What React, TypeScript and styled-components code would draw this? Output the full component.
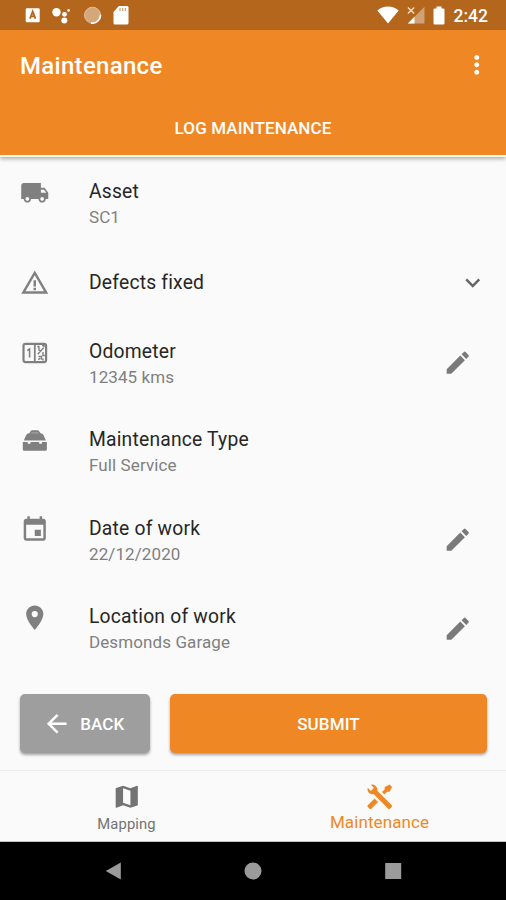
import React from "react";
import styled, { createGlobalStyle } from "styled-components";
import {
  MdArrowBack,
  MdEdit,
  MdEvent,
  MdExpandMore,
  MdLocalShipping,
  MdLocationOn,
  MdMap,
  MdMoreVert,
  MdWarningAmber,
} from "react-icons/md";

const ORANGE = "#ef8824";

const GlobalStyle = createGlobalStyle`
  * { box-sizing: border-box; }
  body {
    margin: 0;
    background: #fafafa;
    font-family: Roboto, "Liberation Sans", sans-serif;
  }
`;

const Screen = styled.div`
  width: 506px;
  height: 900px;
  display: flex;
  flex-direction: column;
  background: #fafafa;
  overflow: hidden;
`;

const StatusBar = styled.div`
  height: 30px;
  flex: none;
  display: flex;
  align-items: center;
  justify-content: space-between;
  padding: 0 18px 0 25px;
  background: #b3661c;
  color: #fff;
`;

const StatusGroup = styled.div<{ $gap: number }>`
  display: flex;
  align-items: center;
  gap: ${(p) => p.$gap}px;
`;

const Clock = styled.span`
  margin-left: 1px;
  font-size: 17.5px;
  font-weight: 500;
  line-height: 30px;
  padding-top: 2px;
`;

const Header = styled.header`
  height: 125px;
  flex: none;
  display: flex;
  flex-direction: column;
  background: ${ORANGE};
  color: #fff;
  box-shadow: 0 2px 0 #fbf8f3, 0 4px 4px rgba(0, 0, 0, 0.3);
`;

const TitleRow = styled.div`
  height: 69px;
  display: flex;
  align-items: center;
  justify-content: space-between;
  padding: 0 15px 0 20px;
`;

const Title = styled.h1`
  margin: 2px 0 0;
  font-size: 24px;
  font-weight: 500;
  letter-spacing: 0.3px;
`;

const Tab = styled.div`
  height: 56px;
  display: flex;
  align-items: center;
  justify-content: center;
  padding-top: 1px;
  font-size: 17px;
  font-weight: 500;
  letter-spacing: 0.1px;
`;

const List = styled.main`
  flex: none;
  height: 539px;
  padding-top: 3.6px;
`;

const Row = styled.div<{ $single?: boolean }>`
  height: ${(p) => (p.$single ? 71.6 : 88.5)}px;
  display: flex;
  align-items: ${(p) => (p.$single ? "center" : "flex-start")};
  padding-left: 20px;
`;

const Leading = styled.div<{ $single?: boolean }>`
  width: 69px;
  height: 30px;
  flex: none;
  margin-top: ${(p) => (p.$single ? 0 : 19.3)}px;
  color: #808080;
  line-height: 0;
`;

const Labels = styled.div<{ $single?: boolean }>`
  flex: 1;
  padding-top: ${(p) => (p.$single ? 0 : 20.3)}px;
`;

const Primary = styled.div`
  font-size: 19.3px;
  line-height: 26px;
  letter-spacing: 0.2px;
  color: #262626;
`;

const Secondary = styled.div`
  font-size: 17px;
  line-height: 24.5px;
  letter-spacing: 0.1px;
  color: #808080;
`;

const Trailing = styled.div<{ $single?: boolean }>`
  height: 100%;
  display: flex;
  align-items: center;
  padding-right: ${(p) => (p.$single ? 19 : 34)}px;
  color: ${(p) => (p.$single ? "#666" : "#7a7a7a")};
`;

const Actions = styled.div`
  height: 59px;
  flex: none;
  display: grid;
  grid-template-columns: 130px 1fr;
  gap: 20px;
  padding: 0 19px 0 20px;
`;

const ActionButton = styled.button<{ $color: string; $trim?: number }>`
  display: flex;
  align-items: center;
  justify-content: center;
  gap: 9px;
  border: 0;
  padding: 0 ${(p) => p.$trim ?? 0}px 0 0;
  border-radius: 5px;
  background: ${(p) => p.$color};
  color: #fff;
  font: 500 17px Roboto, sans-serif;
  letter-spacing: 0.1px;
  box-shadow: 0 2px 3px rgba(0, 0, 0, 0.35);
`;

const BottomNav = styled.nav`
  flex: none;
  height: 72px;
  margin-top: 17px;
  display: grid;
  grid-template-columns: 1fr 1fr;
  border-top: 1px solid #ececec;
  border-bottom: 1px solid #c4c4c4;
`;

const NavItem = styled.div<{ $active?: boolean }>`
  display: flex;
  flex-direction: column;
  align-items: center;
  padding-top: 11px;
  color: ${(p) => (p.$active ? ORANGE : "#737373")};
  font-size: ${(p) => (p.$active ? 17 : 14.8)}px;
  letter-spacing: 0.1px;
`;

const NavLabel = styled.span<{ $active?: boolean }>`
  line-height: 20px;
  margin-top: ${(p) => (p.$active ? 0 : 2)}px;
`;

const SystemNav = styled.div`
  flex: 1;
  display: flex;
  align-items: center;
  justify-content: center;
  gap: 122px;
  background: #000;
`;

const NoteIcon = () => (
  <svg width="16" height="18" viewBox="0 0 16 18">
    <rect x="0.7" y="2.2" width="14" height="14" rx="1.3" fill="#fff" />
    <path d="M5 12.600 7.700 5.600 10.400 12.600M6 10.400h3.400" fill="none" stroke="#b3661c" strokeWidth="1.8" />
  </svg>
);

const AssistantIcon = () => (
  <svg width="20" height="20" viewBox="0 0 20 20" fill="#fff">
    <circle cx="4.500" cy="7.200" r="4.200" />
    <circle cx="12.500" cy="9.300" r="2.400" />
    <circle cx="16.600" cy="5.400" r="1.300" />
    <circle cx="12.300" cy="15.600" r="3" />
  </svg>
);

const SpinnerIcon = () => (
  <svg width="18" height="18" viewBox="0 0 18 18">
    <circle cx="8.500" cy="9.200" r="8" fill="#d5a87c" stroke="#e2bd9b" strokeWidth="1" />
    <path d="M16.500 8.800a8.200 8.200 0 0 1-9.500 8.300" fill="none" stroke="#fff" strokeWidth="1.6" />
  </svg>
);

const SdCardIcon = () => (
  <svg width="16" height="20" viewBox="0 0 16 20">
    <path d="M5.800 1H14q1.500 0 1.500 1.500V18q0 1.500-1.500 1.500H2Q.5 19.500.5 18V7Z" fill="#fff" />
    <path d="M7 3v3M9.700 3v3M12.400 3v3" stroke="#cf9f72" strokeWidth="1.2" />
  </svg>
);

const WifiIcon = () => (
  <svg width="22" height="18" viewBox="0 0 22 18">
    <path d="M.3 4.500Q5 .6 11 .6T21.700 4.500L11 17.600Z" fill="#fff" />
  </svg>
);

const SignalIcon = () => (
  <svg width="18" height="18" viewBox="0 0 18 18">
    <path d="M17.500.8V17.500H.8Z" fill="#d0a076" />
    <path d="M7.500 10.800V17.500H.8Z" fill="#fff" />
    <path d="m.9 1.400 6.300 6M7.200 1.400l-6.300 6" stroke="#f3dfcc" strokeWidth="1.400" />
  </svg>
);

const BatteryIcon = () => (
  <svg width="12" height="19" viewBox="0 0 12 19">
    <path d="M3.500.5h5v2h1.700q1.300 0 1.300 1.300v13.400q0 1.300-1.300 1.300H1.800Q.5 18.500.5 17.200V3.800q0-1.300 1.300-1.300h1.700Z" fill="#fff" />
  </svg>
);

const OdometerIcon = () => (
  <svg width="30" height="30" viewBox="0 0 30 30" fill="none" stroke="currentColor">
    <rect x="3.500" y="5.800" width="22.600" height="18.300" rx="2" strokeWidth="2.200" />
    <path d="M14.800 5.700V24" strokeWidth="1.800" />
    <path d="M7.300 12.500 9.600 11v8.600" strokeWidth="1.600" />
    <path d="M17.300 8.500h1.600v3.300l1.800 1.200M17.800 16.200l5.800-6.400M22 7.500h2v1.800M18.500 18.500h3v3.300M23 14v3.500h1.800M18.300 21.800l2-1.700M23 20.500v2" strokeWidth="1.400" />
  </svg>
);

const ToolboxIcon = () => (
  <svg width="30" height="30" viewBox="0 0 30 30" fill="currentColor">
    <path d="M9.200 7.300 11 4.700q.4-.5 1-.5h5.800q.6 0 1 .5l1.800 2.600q2 .2 2.900 1.800l2.400 5.400H3.800l2.400-5.400q.9-1.600 3-1.800Z" />
    <path d="M11.300 6.900h7.200" stroke="#a8a8a8" strokeWidth="1" />
    <path d="M2.800 16.100h5v1.700h2.700v-1.700h8.700v1.700h2.700v-1.700h5v7.200q0 1.500-1.500 1.500H4.300q-1.500 0-1.500-1.500Z" />
  </svg>
);

const ToolsIcon = () => (
  <svg width="29.500" height="29.500" viewBox="0 0 24 24" fill="currentColor">
    <path d="M21.710 20.290 20.290 21.710A1 1 0 0 1 18.880 21.710L7 9.850A3.810 3.810 0 0 1 6 10 4 4 0 0 1 2.220 4.700L4.760 7.240 7.240 4.760 4.700 2.220A4 4 0 0 1 10 6 3.810 3.810 0 0 1 9.850 7L21.710 18.880A1 1 0 0 1 21.710 20.290M2.290 18.880A1 1 0 0 0 2.290 20.290L3.710 21.710A1 1 0 0 0 5.120 21.710L10.590 16.250 7.760 13.420M20 2 16 4V6L13.830 8.170 15.830 10.170 18 8H20L22 4Z" />
  </svg>
);

const SystemIcon = ({ kind }: { kind: "back" | "home" | "recent" }) => (
  <svg width="18" height="18" viewBox="0 0 18 18" fill="#9b9b9b">
    {kind === "back" && <path d="M1.800 9 16.800.5v17Z" />}
    {kind === "home" && <circle cx="9" cy="9" r="8.500" />}
    {kind === "recent" && <rect x="1.200" y="1" width="16" height="16" rx="0.500" />}
  </svg>
);

type Item = {
  icon: React.ReactNode;
  label: string;
  value?: string;
  trailing?: React.ReactNode;
};

const items: Item[] = [
  { icon: <MdLocalShipping size={29.5} />, label: "Asset", value: "SC1" },
  { icon: <MdWarningAmber size={29.5} />, label: "Defects fixed", trailing: <MdExpandMore size={29.5} /> },
  { icon: <OdometerIcon />, label: "Odometer", value: "12345 kms", trailing: <MdEdit size={29.5} /> },
  { icon: <ToolboxIcon />, label: "Maintenance Type", value: "Full Service" },
  { icon: <MdEvent size={29.5} />, label: "Date of work", value: "22/12/2020", trailing: <MdEdit size={29.5} /> },
  { icon: <MdLocationOn size={29.5} />, label: "Location of work", value: "Desmonds Garage", trailing: <MdEdit size={29.5} /> },
];

export default function App() {
  return (
    <>
      <GlobalStyle />
      <Screen>
        <StatusBar>
          <StatusGroup $gap={11.3}>
            <NoteIcon />
            <AssistantIcon />
            <SpinnerIcon />
            <SdCardIcon />
          </StatusGroup>
          <StatusGroup $gap={8}>
            <WifiIcon />
            <SignalIcon />
            <BatteryIcon />
            <Clock>2:42</Clock>
          </StatusGroup>
        </StatusBar>
        <Header>
          <TitleRow>
            <Title>Maintenance</Title>
            <MdMoreVert size={29.5} />
          </TitleRow>
          <Tab>LOG MAINTENANCE</Tab>
        </Header>
        <List>
          {items.map(({ icon, label, value, trailing }) => (
            <Row key={label} $single={!value}>
              <Leading $single={!value}>{icon}</Leading>
              <Labels $single={!value}>
                <Primary>{label}</Primary>
                {value && <Secondary>{value}</Secondary>}
              </Labels>
              {trailing && <Trailing $single={!value}>{trailing}</Trailing>}
            </Row>
          ))}
        </List>
        <Actions>
          <ActionButton $color="#9e9e9e" $trim={4}>
            <MdArrowBack size={29.5} />
            BACK
          </ActionButton>
          <ActionButton $color={ORANGE}>SUBMIT</ActionButton>
        </Actions>
        <BottomNav>
          <NavItem>
            <MdMap size={29.5} />
            <NavLabel>Mapping</NavLabel>
          </NavItem>
          <NavItem $active>
            <ToolsIcon />
            <NavLabel $active>Maintenance</NavLabel>
          </NavItem>
        </BottomNav>
        <SystemNav>
          <SystemIcon kind="back" />
          <SystemIcon kind="home" />
          <SystemIcon kind="recent" />
        </SystemNav>
      </Screen>
    </>
  );
}
